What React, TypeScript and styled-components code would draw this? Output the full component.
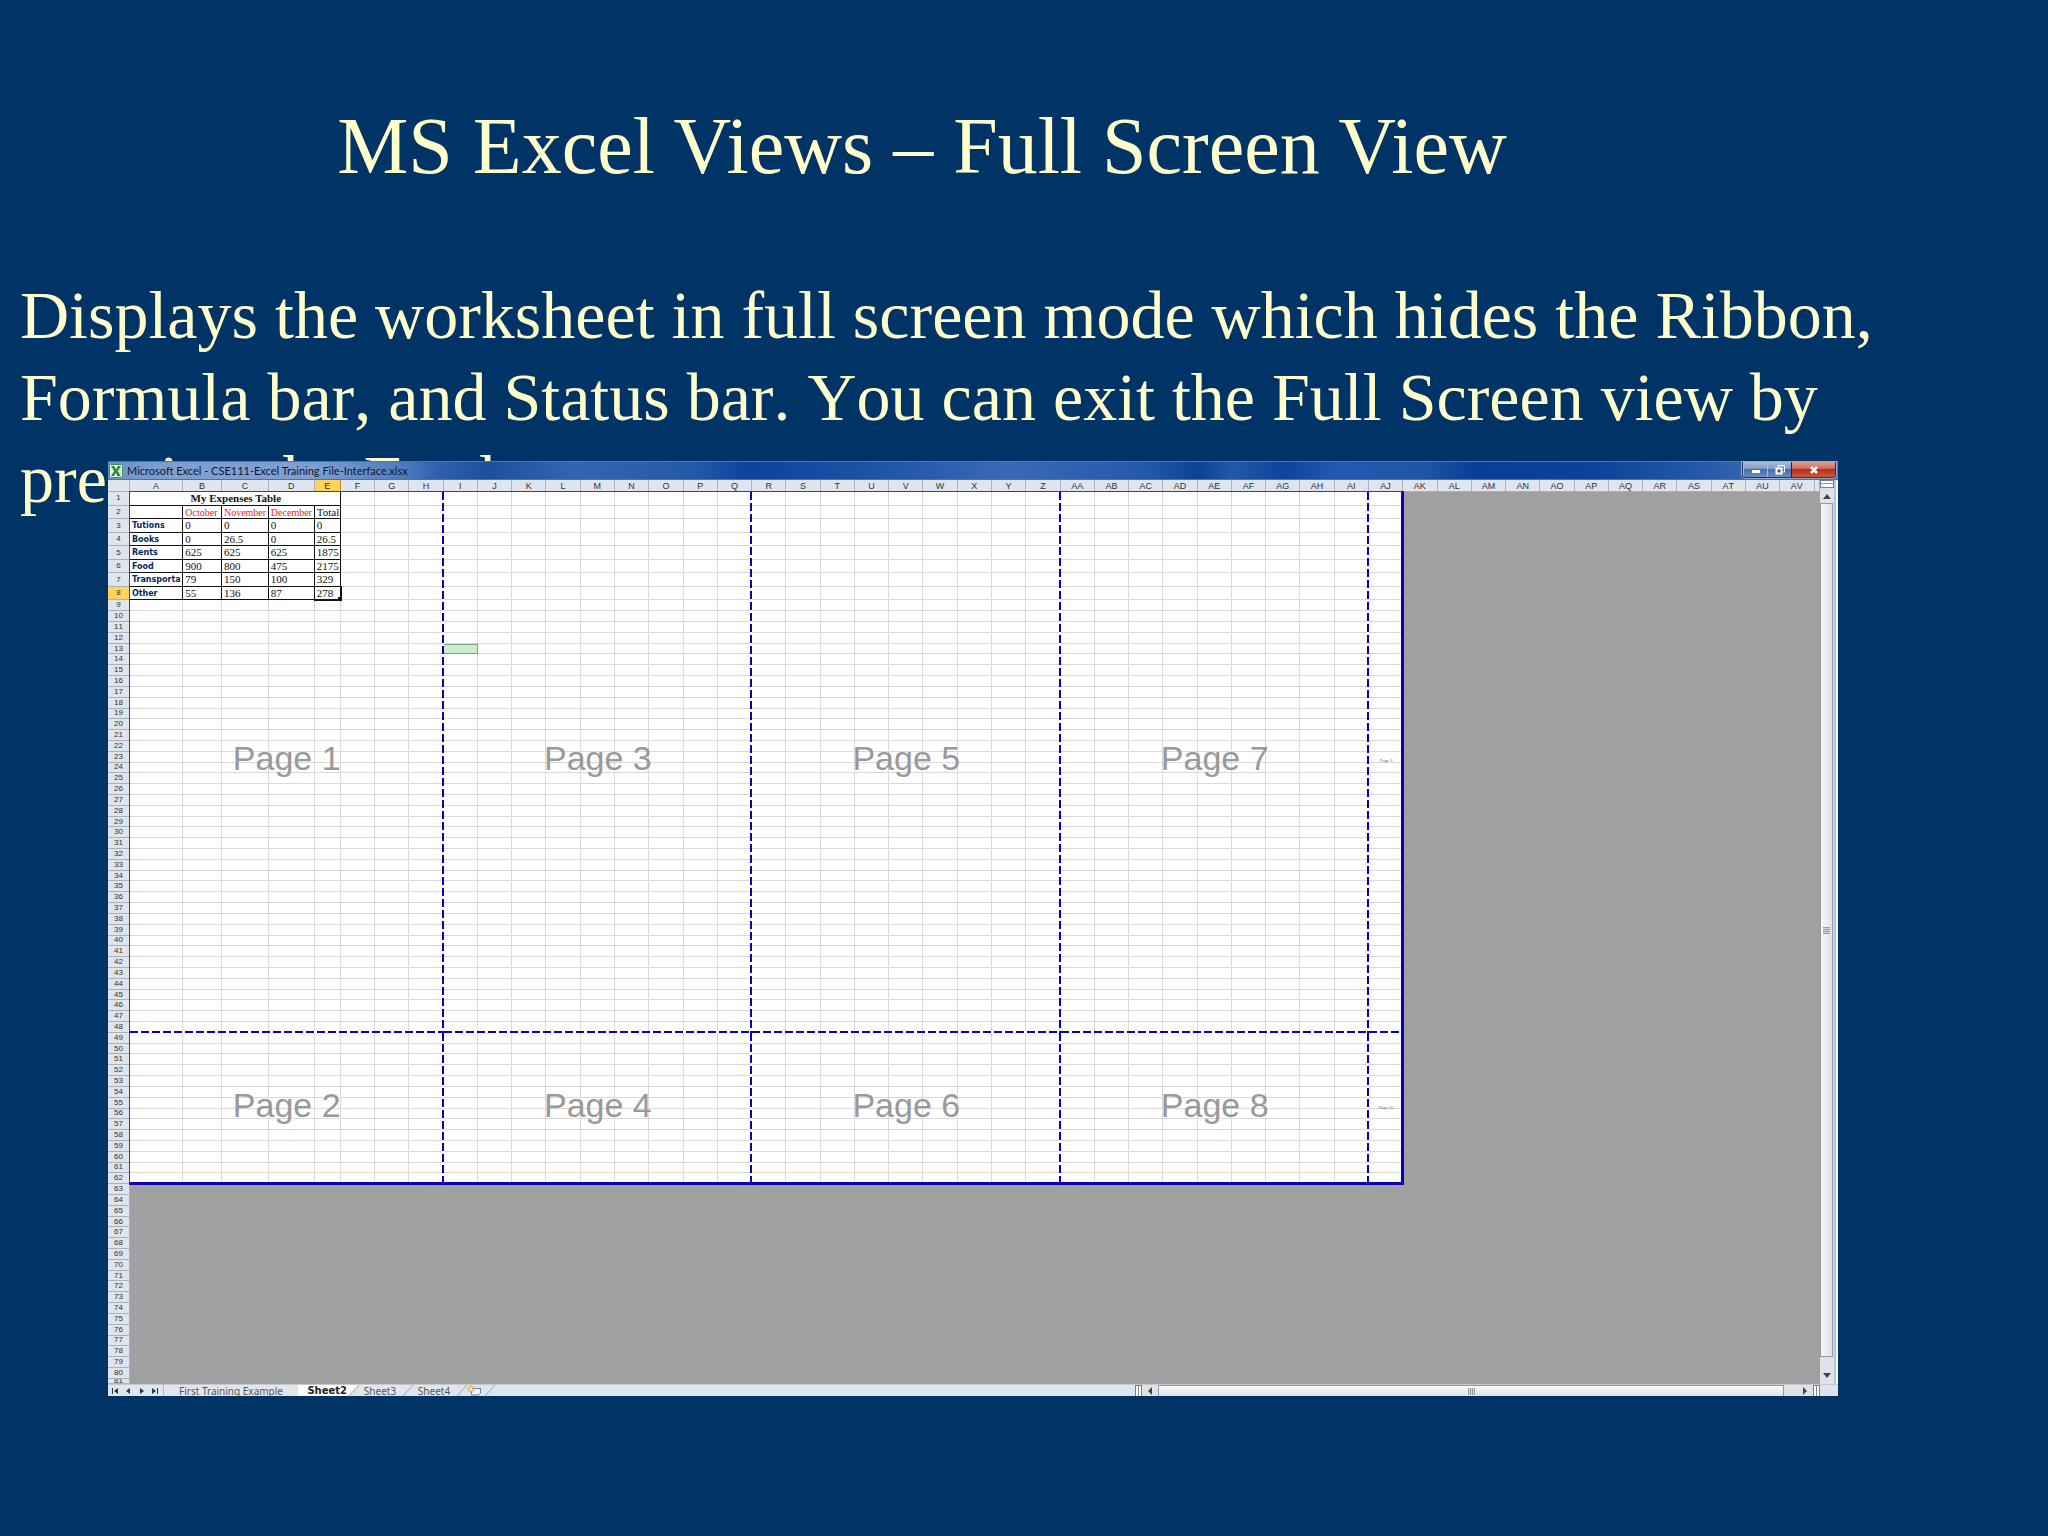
import React from 'react';
import styled, { createGlobalStyle, css } from 'styled-components';

const GlobalStyle = createGlobalStyle`
  *, *::before, *::after { box-sizing: border-box; }
  body { margin: 0; background: #003366; }
  button { font: inherit; }
`;

const serif = '"Liberation Serif", "Times New Roman", serif';
const sans = '"Liberation Sans", Arial, sans-serif';
const blue = '#0a00b4';

/* ---------- slide ---------- */

const Slide = styled.main`
  min-height: 100vh;
  background: #003366;
  color: #ffffcc;
  font-family: ${serif};
  font-kerning: none;
  overflow: hidden;
`;

const SlideTitle = styled.h1`
  margin: 0;
  padding: 100px 204px 0 0;
  font-size: 80px;
  line-height: 92px;
  font-weight: 400;
  font-kerning: normal;
  text-align: center;
`;

const SlideText = styled.p`
  margin: 0;
  padding: 82px 140px 0 20px;
  font-size: 68px;
  line-height: 82px;
`;

const Shot = styled.section`
  position: relative;
  margin: -59px 210px 0 108px;
  display: flex;
  flex-direction: column;
  background: #dfe4ec;
  color: #222;
  font-family: ${sans};
`;

/* ---------- title bar ---------- */

const TitleBar = styled.header`
  display: flex;
  align-items: center;
  height: 19px;
  padding-left: 1px;
  border-top: 1px solid #4a78b4;
  border-bottom: 1px solid #5c6f8c;
  background:
    radial-gradient(ellipse 200px 30px at 130px 9px, #7f9fd0 40%, rgba(127, 159, 208, 0) 100%),
    linear-gradient(90deg, #5580c0 0, #3f6db6 17%, #1c4f9c 22%, #3365b4 27%, #2458a8 34%, #0c439a 37%,
      #1d52a6 44%, #3a69b8 52%, #2458ac 60%, #0c4296 63%, #2458ac 65%, #0d4398 68%, #2459b0 71%,
      #2055a8 76%, #083f94 79%, #0a4398 86%, #2a5cac 93%, #5c82bc 100%);
`;

const WindowTitle = styled.h2`
  flex: 1;
  margin: 0 0 0 4px;
  font: 400 11px/16px Lato, "Open Sans", sans-serif;
  color: #0c1830;
  white-space: nowrap;
`;

const Controls = styled.div`
  display: flex;
  align-self: flex-start;
  height: 16px;
  margin-right: 2px;
  border: 1px solid #24364f;
  border-top: 0;
  border-radius: 0 0 4px 4px;
  box-shadow: 0 0 0 1px #8fa9cf;
  overflow: hidden;
`;

const Control = styled.button<{ $close?: boolean }>`
  display: flex;
  align-items: center;
  justify-content: center;
  width: ${p => (p.$close ? 44 : 24)}px;
  padding: 0;
  border: 0;
  border-left: 1px solid ${p => (p.$close ? '#3a1a20' : '#a8bcdc')};
  color: #fff;
  background: ${p => p.$close
    ? 'linear-gradient(#e0a091 0, #cf6a58 45%, #b62f1c 50%, #cf5a3c 100%)'
    : 'linear-gradient(#a9bcd9 0, #7f9ac6 45%, #4a6ca6 50%, #6b8cc0 100%)'};
`;

/* ---------- worksheet ---------- */

const Body = styled.div`
  display: grid;
  grid-template-columns: minmax(0, 1fr) 18px;
`;

const tracks = css`
  display: grid;
  grid-template-columns:
    minmax(0, 219fr) minmax(0, 535fr) minmax(0, 386fr) minmax(0, 470fr) minmax(0, 460fr)
    minmax(0, 260fr) repeat(43, minmax(0, 343fr)) minmax(0, 55fr);
  grid-template-rows:
    minmax(0, 120fr) minmax(0, 138fr) repeat(7, minmax(0, 135fr))
    repeat(72, minmax(0, 108fr)) minmax(0, 52fr);
`;

const SheetArea = styled.div`
  position: relative;
  aspect-ratio: 1712 / 904;
  background: #a0a0a0;
`;

const Grid = styled.table`
  ${tracks}
  width: 100%;
  height: 100%;
  thead, tbody, tr { display: contents; }
`;

const head = css<{ $on?: boolean }>`
  display: flex;
  align-items: center;
  justify-content: center;
  padding: 0;
  overflow: hidden;
  font-weight: 400;
  color: #333;
  border-right: 1px solid #a9b1bc;
  border-bottom: 1px solid #a9b1bc;
  background: ${p => (p.$on ? '#ffd35c' : '#e0e4ec')};
`;

const ColHead = styled.th<{ $on?: boolean }>`
  ${head}
  font-size: 9px;
  line-height: 10px;
  ${p => p.$on && 'border-right-color: #c08a30;'}
`;

const RowHead = styled.th<{ $on?: boolean }>`
  ${head}
  font-size: 8px;
  line-height: 8px;
`;

type Kind = 'plain' | 'title' | 'month' | 'label' | 'value' | 'green' | 'active';

const Cell = styled.td<{ $kind: Kind }>`
  position: relative;
  display: flex;
  align-items: center;
  padding: 0;
  overflow: hidden;
  white-space: nowrap;
  background: #fff;
  border-right: 1px solid #d9d9dc;
  border-bottom: 1px solid #d9d9dc;
  ${p => p.$kind !== 'plain' && p.$kind !== 'green' && css`
    padding-left: 2px;
    border-color: #111;
    font: 400 11px/11px ${serif};
    color: #111;
  `}
  ${p => p.$kind === 'title' && css`
    grid-column: span 5;
    justify-content: center;
    font-weight: 700;
  `}
  ${p => p.$kind === 'month' && css`
    font-size: 10px;
    color: #f01818;
  `}
  ${p => p.$kind === 'label' && css`
    padding-top: 1px;
    font: 700 8px/10px "DejaVu Sans", sans-serif;
    color: #052a5c;
  `}
  ${p => p.$kind === 'green' && css`
    background: #c6efce;
    border-color: #8c9a8c;
    box-shadow: inset 0 1px #8c9a8c;
  `}
  ${p => p.$kind === 'active' && css`
    overflow: visible;
    outline: 1px solid #111;
    box-shadow: inset 0 0 0 1px #fff;
    &::after {
      content: '';
      position: absolute;
      right: -2px;
      bottom: -2px;
      width: 4px;
      height: 4px;
      background: #111;
    }
    z-index: 3;
  `}
`;

const Outside = styled.td<{ $from: number }>`
  grid-column: ${p => p.$from} / -1;
  padding: 0;
`;

/* ---------- page break overlay ---------- */

const Overlay = styled.div`
  ${tracks}
  position: absolute;
  inset: 0;
  z-index: 2;
  pointer-events: none;
`;

const Frame = styled.div`
  grid-column: 2 / 38;
  grid-row: 2 / 64;
  margin: -1px;
  border: 1px solid #3a34c4;
  border-right: 3px solid ${blue};
  border-bottom: 3px solid ${blue};
`;

const Page = styled.div<{ $col: string; $row: string; $right: boolean; $bottom: boolean; $tiny: boolean }>`
  grid-column: ${p => p.$col};
  grid-row: ${p => p.$row};
  display: flex;
  align-items: center;
  justify-content: center;
  padding-bottom: ${p => (p.$tiny ? 2 : 8)}px;
  color: ${p => (p.$tiny ? '#777' : '#999')};
  font-size: ${p => (p.$tiny ? 4 : 34)}px;
  line-height: 1;
  background-repeat: no-repeat;
  background-position: right top, left bottom;
  background-size: ${p => (p.$right ? '2px' : '0')} 100%, 100% ${p => (p.$bottom ? '2px' : '0')};
  background-image:
    repeating-linear-gradient(180deg, ${blue} 0 8px, #fff 8px 11px),
    repeating-linear-gradient(90deg, ${blue} 0 8px, #fff 8px 11px);
`;

/* ---------- scroll bars and tabs ---------- */

const VScroll = styled.div`
  display: flex;
  flex-direction: column;
  border-right: 2px solid #f6f8fa;
  box-shadow: inset -2px 0 #b3c6d8;
  padding-right: 2px;
  background: #dcdfe8;
`;

const SplitBox = styled.div`
  height: 8px;
  margin-bottom: 3px;
  border: 1px solid #777d86;
  background: linear-gradient(#fff 0 2px, #999 2px 3px, #fff 3px);
`;

const Arrow = styled.button<{ $w?: number; $h?: number; $end?: boolean }>`
  flex: none;
  display: flex;
  align-items: ${p => (p.$end && p.$h ? 'flex-end' : 'center')};
  justify-content: ${p => (p.$end && p.$w ? 'flex-end' : 'center')};
  width: ${p => (p.$w ? `${p.$w}px` : 'auto')};
  height: ${p => (p.$h ? `${p.$h}px` : 'auto')};
  padding: ${p => (p.$end ? (p.$w ? '0 4px' : '4px 0') : '0')};
  border: 0;
  background: #dfe2e8;
  color: #444;
`;

const Thumb = styled.div<{ $vertical?: boolean }>`
  flex: 1;
  display: flex;
  align-items: center;
  justify-content: center;
  border: 1px solid #9299a6;
  ${p => (p.$vertical ? 'margin-right: 1px;' : 'border-bottom: 0;')}
  background: linear-gradient(${p => (p.$vertical ? '90deg' : '180deg')}, #f8f9fb, #e0e2ea);
`;

const Grip = styled.i<{ $vertical?: boolean }>`
  width: 7px;
  height: 7px;
  background: repeating-linear-gradient(${p => (p.$vertical ? '180deg' : '90deg')}, #999ca2 0 1px, #d4d6da 1px 2px);
`;

const Footer = styled.footer`
  display: flex;
  height: 12px;
  overflow: hidden;
  border-top: 1px solid #c4c9d0;
  background: #dde5ee;
`;

const Nav = styled.div`
  display: flex;
  align-items: center;
  justify-content: space-between;
  width: 56px;
  padding: 0 4px;
  border-right: 1px solid #b2b8c0;
`;

const NavButton = styled.button`
  display: flex;
  padding: 0;
  border: 0;
  background: none;
  color: #333;
`;

const Tabs = styled.nav`
  flex: 1;
  display: flex;
  align-items: stretch;
`;

const Tab = styled.button<{ $on?: boolean; $wide?: boolean }>`
  width: ${p => (p.$wide ? 134 : p.$on ? 49 : 42)}px;
  padding: 0;
  border: 0;
  background: ${p => (p.$on ? '#fff' : '#e2e6ec')};
  color: ${p => (p.$on ? '#222' : '#555')};
  font: ${p => (p.$on ? '700 10px/12px "DejaVu Sans"' : '400 10px/12px "Noto Sans"')}, sans-serif;
  text-align: ${p => (p.$on ? 'right' : 'center')};
  white-space: nowrap;
`;

const HScroll = styled.div`
  display: flex;
  width: 703px;
`;

const SplitHandle = styled.div`
  width: 7px;
  border: 1px solid #777d86;
  border-bottom: 0;
  background: linear-gradient(90deg, #fff 0 2px, #888 2px 3px, #fff 3px);
`;

const Tri = ({ d, w = 8, h = 8 }: { d: string; w?: number; h?: number }) => (
  <svg width={w} height={h} viewBox={`0 0 ${w} ${h}`} aria-hidden="true">
    <path d={d} fill="currentColor" />
  </svg>
);

const Slant = ({ fill = '#e2e6ec' }: { fill?: string }) => (
  <svg width="12" height="12" viewBox="0 0 12 12" aria-hidden="true">
    <path d="M0 0H12L1 12H0Z" fill={fill} />
    <path d="M12 0L1 12" stroke="#9aa2ac" fill="none" />
  </svg>
);

const ExcelIcon = () => (
  <svg width="14" height="14" viewBox="0 0 14 14" aria-hidden="true">
    <rect x=".5" y=".5" width="13" height="13" rx="1" fill="#e4f2e0" stroke="#4e8a56" />
    <path d="M9 3h3M9 6h3M9 9h3M9 12h3" stroke="#9cc79c" />
    <path d="M2 2h3l2 3.400 2-3.400h3L8.500 7l3 5h-3L6.700 8.700 5 12H2l3.200-5z" fill="#248a3c" />
  </svg>
);

const NewSheetIcon = () => (
  <svg width="16" height="12" viewBox="0 0 16 12" aria-hidden="true">
    <path d="M5 3.500h8.500V8l-2 2H4.500V6" fill="#f4f6fc" stroke="#747fae" />
    <path d="M4 0v8M0 4h8M1 1l6 6M7 1L1 7" stroke="#e8a030" />
    <circle cx="4" cy="4" r="1.500" fill="#fff0a0" />
  </svg>
);

/* ---------- data ---------- */

const letters = 'ABCDEFGHIJKLMNOPQRSTUVWXYZ'.split('');
const columns = [...letters, ...letters.slice(0, 22).map(l => `A${l}`)];
const expenses = [
  ['', 'October', 'November', 'December', 'Total'],
  ['Tutions', '0', '0', '0', '0'],
  ['Books', '0', '26.5', '0', '26.5'],
  ['Rents', '625', '625', '625', '1875'],
  ['Food', '900', '800', '475', '2175'],
  ['Transporta', '79', '150', '100', '329'],
  ['Other', '55', '136', '87', '278'],
];
const ROWS = 81;
const LAST_ROW = 62;
const PRINT_COLS = 36;

const breaks = ['2 / 10', '10 / 19', '19 / 28', '28 / 37', '37 / 38'];

const kindOf = (row: number, col: number): Kind => {
  if (row === 13 && col === 8) return 'green';
  if (row < 2 || row > 8 || col > 4) return 'plain';
  if (row === 8 && col === 4) return 'active';
  if (col === 0) return 'label';
  return row === 2 && col < 4 ? 'month' : 'value';
};

const Row = ({ row }: { row: number }) => {
  const first = row === 1 ? 5 : 0;
  const printed = row <= LAST_ROW;
  return (
    <tr>
      <RowHead scope="row" $on={row === 8}>{row}</RowHead>
      {row === 1 && <Cell colSpan={5} $kind="title">My Expenses Table</Cell>}
      {printed && Array.from({ length: PRINT_COLS - first }, (_, i) => i + first).map(col => (
        <Cell key={col} $kind={kindOf(row, col)}>{expenses[row - 2]?.[col]}</Cell>
      ))}
      <Outside colSpan={printed ? 13 : 49} $from={printed ? 38 : 2} />
    </tr>
  );
};

const Sheet = () => (
  <SheetArea>
    <Grid aria-label="Worksheet">
      <thead>
        <tr>
          <ColHead as="td" />
          {columns.map(c => <ColHead key={c} scope="col" $on={c === 'E'}>{c}</ColHead>)}
          <ColHead as="td" />
        </tr>
      </thead>
      <tbody>
        {Array.from({ length: ROWS }, (_, i) => <Row key={i} row={i + 1} />)}
      </tbody>
    </Grid>
    <Overlay>
      {breaks.map((col, i) => [0, 1].map(half => (
        <Page
          key={`${i}-${half}`}
          $col={col}
          $row={half ? '50 / 64' : '2 / 50'}
          $right={i < 4}
          $bottom={half === 0}
          $tiny={i === 4}
        >
          Page {i * 2 + half + 1}
        </Page>
      )))}
    </Overlay>
    <Overlay><Frame /></Overlay>
  </SheetArea>
);

export default function App() {
  return (
    <>
      <GlobalStyle />
      <Slide>
        <SlideTitle>MS Excel Views – Full Screen View</SlideTitle>
        <SlideText>
          Displays the worksheet in full screen mode which hides the Ribbon, Formula bar, and
          Status bar. You can exit the Full Screen view by pressing the Esc key.
        </SlideText>
        <Shot>
          <TitleBar>
            <ExcelIcon />
            <WindowTitle>Microsoft Excel - CSE111-Excel Training File-Interface.xlsx</WindowTitle>
            <Controls>
              <Control aria-label="Minimize"><Tri w={10} h={10} d="M1 5h8v3H1z" /></Control>
              <Control aria-label="Restore">
                <svg width="12" height="12" viewBox="0 0 12 12" aria-hidden="true">
                  <path d="M4 3V1.500h6.500V8H9" fill="none" stroke="#fff" />
                  <path d="M2.500 4.500h5v5h-5z" fill="#42547a" stroke="#fff" strokeWidth="2" />
                </svg>
              </Control>
              <Control $close aria-label="Close">
                <svg width="10" height="10" viewBox="0 0 10 10" aria-hidden="true">
                  <path d="M2 2l6 6M8 2L2 8" stroke="#fff" strokeWidth="2.500" />
                </svg>
              </Control>
            </Controls>
          </TitleBar>
          <Body>
            <Sheet />
            <VScroll>
              <SplitBox />
              <Arrow $h={12} aria-label="Scroll up"><Tri d="M0 6L4 1l4 5z" /></Arrow>
              <Thumb $vertical><Grip $vertical /></Thumb>
              <Arrow $h={27} $end aria-label="Scroll down"><Tri d="M0 1h8L4 6z" /></Arrow>
            </VScroll>
          </Body>
          <Footer>
            <Nav>
              <NavButton aria-label="First sheet"><Tri d="M0 1h1v6H0zM6 1v6L2 4z" /></NavButton>
              <NavButton aria-label="Previous sheet"><Tri d="M5 1v6L1 4z" /></NavButton>
              <NavButton aria-label="Next sheet"><Tri d="M2 1v6l4-3z" /></NavButton>
              <NavButton aria-label="Last sheet"><Tri d="M1 1v6l4-3zM6 1h1v6H6z" /></NavButton>
            </Nav>
            <Tabs aria-label="Sheets">
              <Tab $wide>First Training Example</Tab>
              <Tab $on>Sheet2</Tab>
              <Slant fill="#fff" />
              <Tab>Sheet3</Tab>
              <Slant />
              <Tab>Sheet4</Tab>
              <Slant />
              <NewSheetIcon />
              <Slant />
            </Tabs>
            <HScroll>
              <SplitHandle />
              <Arrow $w={16} aria-label="Scroll left"><Tri d="M6 0v8L2 4z" /></Arrow>
              <Thumb><Grip /></Thumb>
              <Arrow $w={29} $end aria-label="Scroll right"><Tri d="M2 0v8l4-4z" /></Arrow>
              <SplitHandle />
              <Arrow as="span" $w={18} />
            </HScroll>
          </Footer>
        </Shot>
      </Slide>
    </>
  );
}
